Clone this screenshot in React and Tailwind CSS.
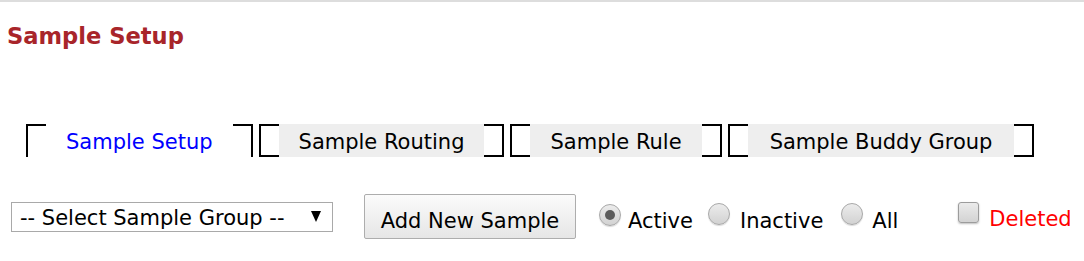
import React from "react";

function Tab({ label, active, wide }) {
  if (active) {
    return (
      <div className="flex h-[33px]">
        <div className="w-[20px] h-[33px] border-t-2 border-l-2 border-black" />
        <div className="px-[20px] pt-[3px] leading-[30px] text-[#0000ff] bg-white">{label}</div>
        <div className="w-[20px] h-[33px] border-t-2 border-r-2 border-black" />
      </div>
    );
  }
  return (
    <div className="flex h-[33px]">
      <div className="w-[20px] h-[33px] border-t-2 border-l-2 border-b-2 border-black" />
      <div className={wide ? "px-[22px] pt-[3px] leading-[30px] text-black bg-[#eeeeee]" : "px-[20px] pt-[3px] leading-[30px] text-black bg-[#eeeeee]"}>{label}</div>
      <div className="w-[20px] h-[33px] border-t-2 border-r-2 border-b-2 border-black" />
    </div>
  );
}

function Radio({ checked }) {
  return (
    <div className="w-[22px] h-[22px] rounded-full border border-[#a8a8a8] bg-gradient-to-b from-[#ececec] to-[#d2d2d2] shadow-[0_1px_1px_rgba(0,0,0,0.15)] flex items-center justify-center shrink-0">
      {checked && <div className="w-[10px] h-[10px] rounded-full bg-[#5c5c5c]" />}
    </div>
  );
}

export default function App() {
  return (
    <div className="w-[1084px] h-[261px] bg-white border-t-2 border-[#dddddd] font-['DejaVu_Sans',sans-serif] text-[21px] text-black overflow-hidden">
      <h1 className="pl-[7px] pt-[21px] text-[22.6px] leading-[26px] font-bold text-[#a8252a]">Sample Setup</h1>

      <div className="flex gap-[6px] pl-[26px] mt-[75px]">
        <Tab label="Sample Setup" active />
        <Tab label="Sample Routing" />
        <Tab label="Sample Rule" />
        <Tab label="Sample Buddy Group" wide />
      </div>

      <div className="flex items-start mt-[37px]">
        <div className="ml-[11px] mt-[8px] w-[322px] h-[30px] border border-[#a9a9a9] flex items-center pl-[8px] pr-[11px] pt-[2px] justify-between">
          <span className="leading-[24px]">-- Select Sample Group --</span>
          <svg width="10" height="11" viewBox="0 0 10 11" className="mt-[-3px]">
            <polygon points="0,0 10,0 5,11" fill="#000" />
          </svg>
        </div>

        <button className="ml-[31px] w-[212px] h-[45px] border border-[#adadad] rounded-[2px] bg-gradient-to-b from-[#fbfbfb] to-[#e6e6e6] flex items-center justify-center pt-[9px] leading-[24px]">
          Add New Sample
        </button>

        <div className="ml-[23px] mt-[10px]"><Radio checked /></div>
        <span className="ml-[7px] mt-[15px] leading-[24px]">Active</span>

        <div className="ml-[15px] mt-[9px]"><Radio /></div>
        <span className="ml-[10px] mt-[15px] leading-[24px]">Inactive</span>

        <div className="ml-[18px] mt-[9px]"><Radio /></div>
        <span className="ml-[9px] mt-[15px] leading-[24px]">All</span>

        <div className="ml-[60px] mt-[8px] w-[21px] h-[21px] rounded-[3px] border border-[#9c9c9c] bg-gradient-to-b from-[#ebebeb] to-[#d3d3d3] shadow-[0_1px_2px_rgba(0,0,0,0.25)]" />
        <span className="ml-[10px] mt-[13px] leading-[24px] text-[#ff0000]">Deleted</span>
      </div>
    </div>
  );
}
